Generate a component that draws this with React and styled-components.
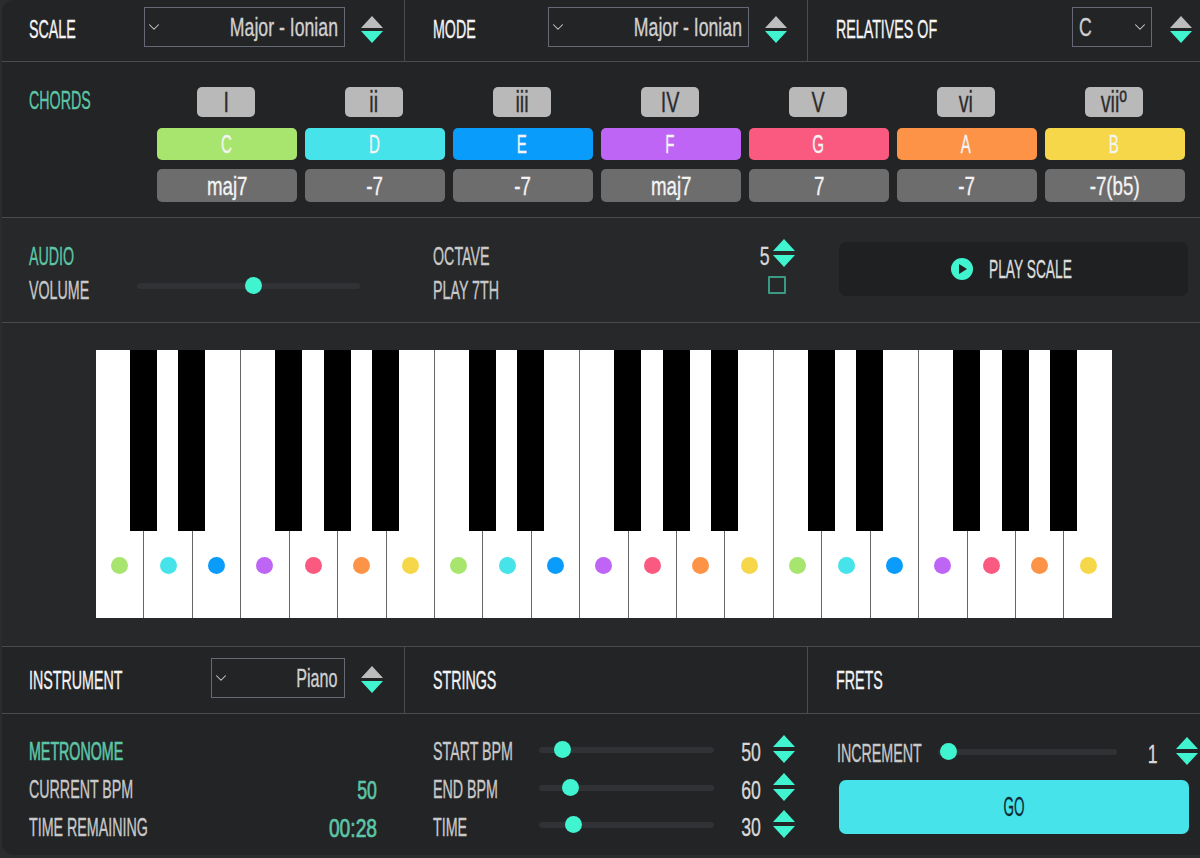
import React from 'react'
import styled, { createGlobalStyle } from 'styled-components'
import { ChevronDown } from 'lucide-react'

const teal = '#40f4cf'
const mint = '#5cc6a6'
const line = '#4a4b4d'
const chordColors = ['#a8e56f', '#46e3ea', '#0a9cfb', '#bf65f5', '#fb5a80', '#fd9346', '#f5d749']

const chords = [
  { degree: 'I', note: 'C', quality: 'maj7' },
  { degree: 'ii', note: 'D', quality: '-7' },
  { degree: 'iii', note: 'E', quality: '-7' },
  { degree: 'IV', note: 'F', quality: 'maj7' },
  { degree: 'V', note: 'G', quality: '7' },
  { degree: 'vi', note: 'A', quality: '-7' },
  { degree: 'viiº', note: 'B', quality: '-7(b5)' }
]

// true when a black key sits on the right side of that white key
const blackAfter = [true, true, false, true, true, true, false]

const GlobalStyle = createGlobalStyle`
  html, body {
    margin: 0;
    height: 100%;
    overflow: hidden;
    background: #2b2c2e;
  }
  body {
    font-family: "Liberation Sans", Arial, sans-serif;
  }
`

const Panel = styled.div`
  box-sizing: border-box;
  width: 1210px;
  height: 855px;
  margin-left: 2px;
  background: #232426;
  border-radius: 12px;
  overflow: hidden;
`

const Row = styled.div`
  display: flex;
  height: ${({ $height }) => $height}px;
  background: ${({ $bg }) => $bg || 'transparent'};
  border-bottom: 1px solid ${line};
  &:last-child {
    border-bottom: 0;
  }
`

const Column = styled.div`
  box-sizing: border-box;
  width: ${({ $width }) => $width}px;
  padding-left: ${({ $left }) => $left || 28}px;
  padding-right: ${({ $right }) => $right || 20}px;
  padding-top: ${({ $top }) => $top || 0}px;
  padding-bottom: ${({ $bottom }) => $bottom || 0}px;
  display: flex;
  align-items: center;
  border-right: ${({ $last }) => ($last ? '0' : `1px solid ${line}`)};
`

const Text = styled.span`
  display: inline-block;
  font-size: ${({ $size }) => $size || 25}px;
  line-height: 1;
  white-space: nowrap;
  color: ${({ $color }) => $color || '#f4f4f4'};
  -webkit-text-stroke: ${({ $heavy }) => ($heavy ? 0.7 : 0.35)}px currentColor;
  transform: scaleX(${({ $squeeze }) => $squeeze || 0.57});
  transform-origin: ${({ $origin }) => $origin || 'left'} center;
`

const SelectBox = styled.div`
  box-sizing: border-box;
  width: ${({ $width }) => $width}px;
  height: 40px;
  margin-left: auto;
  margin-top: ${({ $lift }) => -$lift}px;
  padding: ${({ $left }) => ($left ? '0 2px 0 6px' : '0 6px 0 0')};
  display: flex;
  align-items: center;
  justify-content: space-between;
  border: 1px solid #666975;
`

const SpinnerWrap = styled.div`
  flex: none;
  width: 23px;
  display: flex;
  flex-direction: column;
  align-items: center;
  gap: ${({ $inner }) => $inner}px;
  margin-left: ${({ $gap }) => $gap ?? 16}px;
  margin-top: ${({ $lift }) => -$lift}px;
`

const Arrow = styled.div`
  width: 0;
  height: 0;
  border-left: 11.5px solid transparent;
  border-right: 11.5px solid transparent;
  border-bottom: ${({ $up, $color }) => ($up ? `12px solid ${$color}` : '0')};
  border-top: ${({ $up, $color }) => ($up ? '0' : `12px solid ${$color}`)};
`

const Spinner = ({ muted, gap, lift = 0, inner = 3 }) => (
  <SpinnerWrap $gap={gap} $lift={lift} $inner={inner}>
    <Arrow $up $color={muted ? '#bdbdbd' : teal} />
    <Arrow $color={teal} />
  </SpinnerWrap>
)

const Select = ({ width, value, left, lift = 5, squeeze = 0.68 }) => {
  const chevron = <ChevronDown size={18} strokeWidth={1.4} color="#d0d0d0" />
  return (
    <SelectBox $width={width} $left={left} $lift={lift}>
      {left ? (
        <>
          <Text $size={26} $squeeze={squeeze} $color="#d0d0d0">{value}</Text>
          {chevron}
        </>
      ) : (
        <>
          {chevron}
          <Text $size={26} $squeeze={squeeze} $color="#d0d0d0" $origin="right">{value}</Text>
        </>
      )}
    </SelectBox>
  )
}

const ChordsGrid = styled.div`
  height: 100%;
  box-sizing: border-box;
  padding: 25px 0 0 27px;
  display: grid;
  grid-template-columns: 120px repeat(7, 140px);
  column-gap: 8px;
`

const ChordsTitle = styled.div`
  padding-top: 1px;
`

const ChordColumn = styled.div`
  display: flex;
  flex-direction: column;
  align-items: center;
`

const Chip = styled.div`
  box-sizing: border-box;
  display: flex;
  align-items: center;
  justify-content: center;
  width: ${({ $width }) => $width || 140}px;
  height: ${({ $height }) => $height}px;
  margin-bottom: ${({ $below }) => $below || 0}px;
  margin-right: ${({ $nudge }) => $nudge || 0}px;
  padding-right: ${({ $textNudge }) => $textNudge || 0}px;
  border-radius: 5px;
  background: ${({ $bg }) => $bg};
`

const Stack = styled.div`
  display: flex;
  flex-direction: column;
  gap: ${({ $gap }) => $gap}px;
  flex: 1;
  min-width: 0;
`

const Line = styled.div`
  display: flex;
  align-items: center;
  height: ${({ $height }) => $height || 26}px;
`

const LabelCell = styled.div`
  flex: none;
  width: ${({ $width }) => $width}px;
`

const Value = styled.div`
  margin-left: auto;
  display: flex;
  justify-content: flex-end;
  flex: ${({ $grow }) => ($grow ? 1 : 'none')};
`

const Track = styled.div`
  position: relative;
  flex: none;
  width: ${({ $width }) => $width}px;
  height: 6px;
  margin-top: ${({ $shift }) => $shift || 0}px;
  border-radius: 3px;
  background: #313235;
`

const Thumb = styled.div`
  position: absolute;
  top: -6px;
  width: 17px;
  height: 17px;
  margin-left: -8.5px;
  border-radius: 50%;
  background: ${teal};
`

const Slider = ({ width, at, shift }) => (
  <Track $width={width} $shift={shift}>
    <Thumb style={{ left: at }} />
  </Track>
)

const CheckBox = styled.div`
  box-sizing: border-box;
  width: 18px;
  height: 18px;
  margin-left: auto;
  margin-right: 9px;
  margin-top: -10px;
  border: 2.5px solid #3b9a84;
  border-radius: 1px;
`

const PlayButton = styled.div`
  box-sizing: border-box;
  width: 349px;
  height: 54px;
  display: flex;
  align-items: center;
  justify-content: center;
  gap: 16px;
  padding-right: 6px;
  border-radius: 7px;
  background: #1f2021;
`

const PlayIcon = styled.div`
  flex: none;
  width: 22px;
  height: 22px;
  border-radius: 50%;
  background: ${teal};
  display: flex;
  align-items: center;
  justify-content: center;
  &::after {
    content: '';
    margin-left: 2px;
    border-left: 8px solid #1f2021;
    border-top: 5px solid transparent;
    border-bottom: 5px solid transparent;
  }
`

const GoButton = styled.div`
  width: 350px;
  height: 54px;
  margin-left: 2px;
  display: flex;
  align-items: center;
  justify-content: center;
  border-radius: 7px;
  background: #46e3ea;
`

const PianoRow = styled.div`
  height: 324px;
  box-sizing: border-box;
  padding: 27px 0 0 94px;
  background: #27282a;
  border-bottom: 1px solid ${line};
`

const Keys = styled.div`
  display: flex;
  width: 1016px;
  height: 268px;
`

const WhiteKey = styled.div`
  position: relative;
  flex: 1;
  box-sizing: border-box;
  background: #fff;
  border-right: 1.5px solid #66676a;
  display: flex;
  justify-content: center;
  &:last-child {
    border-right: 0;
  }
`

const BlackKey = styled.div`
  position: absolute;
  z-index: 1;
  top: 0;
  right: -13.5px;
  width: 27px;
  height: 181px;
  background: #000;
`

const Dot = styled.div`
  width: 17px;
  height: 17px;
  margin-top: 207px;
  border-radius: 50%;
  background: ${({ $bg }) => $bg};
`

const Piano = () => (
  <Keys>
    {Array.from({ length: 21 }, (_, i) => (
      <WhiteKey key={i}>
        {blackAfter[i % 7] && i < 20 && <BlackKey />}
        <Dot $bg={chordColors[i % 7]} />
      </WhiteKey>
    ))}
  </Keys>
)

const MeterRow = ({ label, at, value }) => (
  <Line $height={37.7}>
    <LabelCell $width={106}><Text $color="#c9c9c9">{label}</Text></LabelCell>
    <Slider width={175} at={at} shift={-4} />
    <Value><Text $size={26} $squeeze={0.68} $color="#d8d8d8" $origin="right">{value}</Text></Value>
    <Spinner gap={11} lift={6} inner={4} />
  </Line>
)

export default function App() {
  return (
    <>
      <GlobalStyle />
      <Panel>
        <Row $height={61}>
          <Column $width={403} $left={27} $bottom={2}>
            <Text>SCALE</Text>
            <Select width={201} value="Major - Ionian" />
            <Spinner muted />
          </Column>
          <Column $width={404} $bottom={2}>
            <Text>MODE</Text>
            <Select width={201} value="Major - Ionian" />
            <Spinner muted gap={15} />
          </Column>
          <Column $width={404} $bottom={2} $last>
            <Text>RELATIVES OF</Text>
            <Select width={80} value="C" left />
            <Spinner muted gap={17} />
          </Column>
        </Row>

        <Row $height={155}>
          <ChordsGrid>
            <ChordsTitle><Text $color={mint}>CHORDS</Text></ChordsTitle>
            {chords.map((chord, i) => (
              <ChordColumn key={chord.note}>
                <Chip $width={58} $height={30} $below={11} $nudge={2} $bg="#b9b9b9">
                  <Text $size={30} $squeeze={0.66} $color="#2c2c2e" $origin="center">{chord.degree}</Text>
                </Chip>
                <Chip $height={32} $below={9} $textNudge={2} $bg={chordColors[i]}>
                  <Text $size={26} $squeeze={0.58} $origin="center">{chord.note}</Text>
                </Chip>
                <Chip $height={33} $bg="#6d6d6e">
                  <Text $size={26} $squeeze={0.72} $origin="center">{chord.quality}</Text>
                </Chip>
              </ChordColumn>
            ))}
          </ChordsGrid>
        </Row>

        <Row $height={104} $bg="#27282a">
          <Column $width={403} $left={27} $top={6} $last>
            <Stack $gap={8}>
              <Line><Text $color={mint}>AUDIO</Text></Line>
              <Line>
                <LabelCell $width={108}><Text $color="#c9c9c9">VOLUME</Text></LabelCell>
                <Slider width={223} at={116} shift={-8} />
              </Line>
            </Stack>
          </Column>
          <Column $width={404} $right={14} $top={6} $last>
            <Stack $gap={8}>
              <Line>
                <Text $color="#c9c9c9">OCTAVE</Text>
                <Value $grow><Text $size={26} $squeeze={0.68} $color="#d8d8d8" $origin="right">5</Text></Value>
                <Spinner gap={3} lift={6} inner={4} />
              </Line>
              <Line>
                <Text $color="#c9c9c9">PLAY 7TH</Text>
                <CheckBox />
              </Line>
            </Stack>
          </Column>
          <Column $width={403} $left={30} $right={1} $bottom={2} $last>
            <PlayButton>
              <PlayIcon />
              <LabelCell $width={82}><Text $squeeze={0.55} $color="#dcdcdc">PLAY SCALE</Text></LabelCell>
            </PlayButton>
          </Column>
        </Row>

        <PianoRow>
          <Piano />
        </PianoRow>

        <Row $height={66}>
          <Column $width={403} $left={27}>
            <Text>INSTRUMENT</Text>
            <Select width={134} value="Piano" lift={5} squeeze={0.62} />
            <Spinner muted lift={2} />
          </Column>
          <Column $width={404}><Text>STRINGS</Text></Column>
          <Column $width={404} $last><Text>FRETS</Text></Column>
        </Row>

        <Row $height={141}>
          <Column $width={403} $left={27} $right={28} $top={10} $last>
            <Stack $gap={12}>
              <Line><Text $heavy $color={mint}>METRONOME</Text></Line>
              <Line>
                <Text $color="#c9c9c9">CURRENT BPM</Text>
                <Value $grow><Text $heavy $size={26} $squeeze={0.68} $color={mint} $origin="right">50</Text></Value>
              </Line>
              <Line>
                <Text $color="#c9c9c9">TIME REMAINING</Text>
                <Value $grow><Text $heavy $size={26} $squeeze={0.74} $color={mint} $origin="right">00:28</Text></Value>
              </Line>
            </Stack>
          </Column>
          <Column $width={404} $right={14} $top={10} $last>
            <Stack $gap={0}>
              <MeterRow label="START BPM" at={23} value="50" />
              <MeterRow label="END BPM" at={31} value="60" />
              <MeterRow label="TIME" at={34} value="30" />
            </Stack>
          </Column>
          <Column $width={403} $right={14} $last>
            <Stack $gap={8}>
              <Line $height={37}>
                <LabelCell $width={101}><Text $color="#c9c9c9">INCREMENT</Text></LabelCell>
                <Slider width={179} at={10} shift={-4} />
                <Value $grow><Text $size={26} $squeeze={0.68} $color="#d8d8d8" $origin="right">1</Text></Value>
                <Spinner gap={18} lift={6} inner={4} />
              </Line>
              <GoButton><Text $size={27} $squeeze={0.5} $color="#0e2a33" $origin="center">GO</Text></GoButton>
            </Stack>
          </Column>
        </Row>
      </Panel>
    </>
  )
}
